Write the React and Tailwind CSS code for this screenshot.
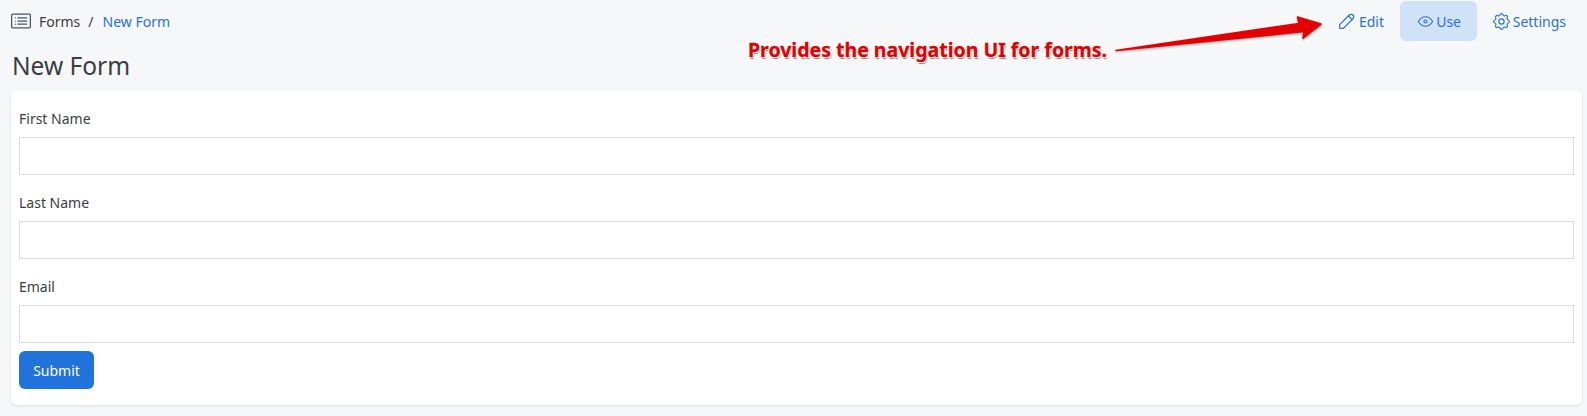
import React from "react";
import { TbPencil, TbEye, TbSettings } from "react-icons/tb";
import { BsCardList } from "react-icons/bs";

const fields = ["First Name", "Last Name", "Email"];

const Arrow = () => (
  <svg
    className="absolute left-[1110px] top-[10px] drop-shadow-[0_1px_1px_rgba(0,0,0,0.35)]"
    width="220"
    height="48"
    viewBox="0 0 220 48"
  >
    <path
      d="M6 40.5 L189 13.5 L187.5 7 L211 14 L193 28 L194 21.5 Z"
      fill="#e30000"
      stroke="#e30000"
      strokeWidth="1.6"
      strokeLinejoin="round"
    />
  </svg>
);

const NavTab = ({ icon: Icon, size, label, active }) => (
  <a
    className={`flex h-10 items-center justify-end rounded-md pr-4 text-[#2573d9] ${
      active ? "bg-[#cfe2f8]" : ""
    } ${label === "Settings" ? "w-[105px]" : label === "Use" ? "w-[77px]" : "w-[68px]"}`}
  >
    <Icon size={size} strokeWidth={1.35} />
    <span className="ml-px">{label}</span>
  </a>
);

const App = () => {
  return (
    <div className="relative h-[416px] overflow-hidden bg-[#f6f7f9] font-['Noto_Sans',sans-serif] text-[14px] text-[#3a3d41]">
      {/* Top bar */}
      <div className="flex h-[42px] items-start justify-between pl-[11px] pr-[5px] pt-px">
        <div className="flex h-10 items-center gap-2">
          <BsCardList size={20} className="text-[#4b5563]" />
          <span>Forms</span>
          <span>/</span>
          <span className="ml-px text-[#2573d9]">New Form</span>
        </div>
        <div className="flex items-center">
          <NavTab icon={TbPencil} size={22} label="Edit" />
          <NavTab icon={TbEye} size={19} label="Use" active />
          <NavTab icon={TbSettings} size={21} label="Settings" />
        </div>
      </div>

      <h1 className="h-[49px] pl-[12px] pt-[8px] text-[24.5px] leading-[32px]">New Form</h1>

      {/* Form card */}
      <div className="ml-[11px] mr-[5px] h-[314px] rounded-md bg-white px-2 pt-[16px] shadow-[0_1px_3px_rgba(0,0,0,0.1)]">
        {fields.map((name) => (
          <div key={name} className="mb-[16px]">
            <label className="block h-[30px] leading-[24px]">{name}</label>
            <input
              type="text"
              className="block h-[38px] w-full border border-[#d9dce0] bg-white"
            />
          </div>
        ))}
        <button className="-mt-[8px] block h-[38px] w-[75px] rounded-md bg-[#1f73db] text-white">
          Submit
        </button>
      </div>

      {/* Annotation over the page */}
      <div className="absolute left-[748px] top-[37px] text-[19.5px] font-bold leading-[26px] text-[#e30000] [-webkit-text-stroke:0.3px_#e30000] [text-shadow:1px_1px_0_#fff,-1px_-1px_0_#fff,1px_-1px_0_#fff,-1px_1px_0_#fff,1px_2px_1px_#888]">
        Provides the navigation UI for forms.
      </div>
      <Arrow />
    </div>
  );
};

export default App;
